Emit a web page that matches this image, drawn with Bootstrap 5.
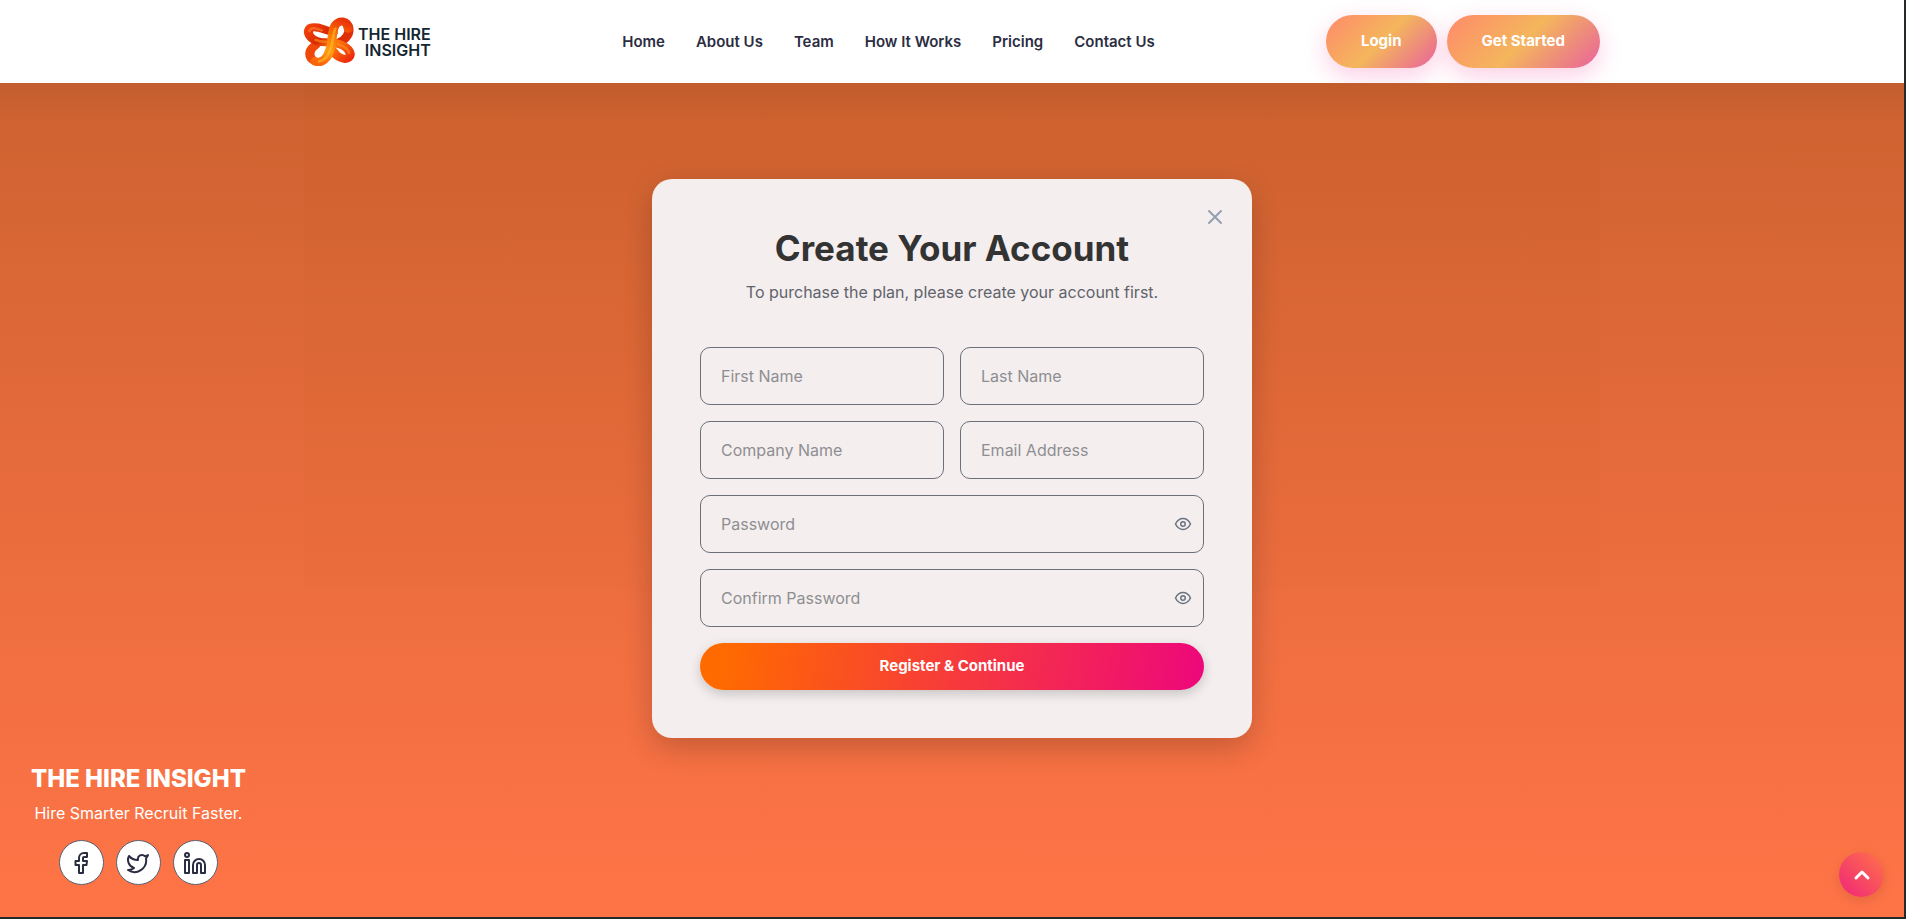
<!DOCTYPE html>
<html lang="en">
<head>
<meta charset="utf-8">
<meta name="viewport" content="width=device-width, initial-scale=1">
<title>The Hire Insight – Create Your Account</title>
<link href="https://cdn.jsdelivr.net/npm/bootstrap@5.3.0/dist/css/bootstrap.min.css" rel="stylesheet">
<style>
  body {
    font-family: Inter, "Liberation Sans", sans-serif;
    border-right: 2px solid #24292a;
    border-bottom: 2px solid #24292a;
    background: #fff;
  }
  .site-header { min-height: 83px; background: #fff; }
  .site-header .container { max-width: 1320px; }
  .brand-mark { width: 147px; gap: 3px; }
  .brand-mark svg { width: 51px; height: 48px; overflow: visible; }
  .brand-name { font-size: 16px; line-height: 16px; font-weight: 600; color: #14262f; text-align: right; }
  .main-links { gap: 0 31px; }
  .main-links a { font-size: 15px; line-height: 24px; font-weight: 600; color: #2b2d42; text-decoration: none; }
  .header-actions { gap: 10px; }
  .btn-glow, .btn-glow:hover {
    height: 53px; padding: 0 35px; border: 0; border-radius: 50px;
    font-size: 15px; font-weight: 700; color: #fff;
    background: linear-gradient(135deg, #ff8a6b 0%, #f4b65c 50%, #e8629c 100%);
    box-shadow: 0 8px 25px rgba(240, 11, 120, .2);
  }
  .hero-area {
    background:
      linear-gradient(rgba(0, 0, 0, .05), rgba(0, 0, 0, 0)) center top / 100% 40px no-repeat,
      linear-gradient(rgba(180, 80, 10, .05), rgba(180, 80, 10, .03)) center top / 1296px 508px no-repeat,
      linear-gradient(#cd6230, #dc6737 27%, #ee6e40 62%, #ff7447);
  }
  .signup-card {
    width: 100%; max-width: 600px; margin-top: 96px; padding: 48px;
    border-radius: 20px; background: #f4eeee;
    box-shadow: 0 10px 30px rgba(0, 0, 0, .2);
  }
  .signup-card h1 { font-size: 35px; line-height: 43px; font-weight: 700; color: #333; margin-bottom: 10px; }
  .signup-card .intro { font-size: 16px; line-height: 24px; color: #5f636b; margin-bottom: 43px; }
  .field-grid { display: grid; grid-template-columns: 1fr 1fr; gap: 16px; }
  .field-wide { grid-column: 1 / -1; }
  .signup-card .form-control {
    height: 58px; padding: 0 20px; border: 1px solid #6b7079; border-radius: 10px;
    background: transparent; font-size: 16px; color: #333;
  }
  .signup-card .form-control::placeholder { color: #8e8e92; }
  .plain-btn { padding: 0; border: 0; background: none; }
  .close-btn { top: 28px; right: 27px; width: 20px; height: 20px; color: #94a0b2; }
  .eye-btn { top: 0; right: 12px; width: 18px; height: 58px; color: #6b7280; }
  .btn-register, .btn-register:hover {
    height: 47px; border: 0; border-radius: 30px; color: #fff; font-size: 15px; font-weight: 700;
    background: linear-gradient(100deg, #ff6a00 5%, #ee0979 98%);
    box-shadow: 0 4px 12px rgba(0, 0, 0, .18);
  }
  .site-footer { padding: 24px 31px 32px; color: #fff; }
  .site-footer h2 { font-size: 24px; line-height: 29px; font-weight: 800; margin-bottom: 8px; }
  .site-footer p { font-size: 16px; line-height: 24px; margin-bottom: 15px; }
  .social-links { gap: 12px; }
  .social-links a { width: 45px; height: 45px; background: #fff; color: #2b2d42; border: 1px solid #5a6070; }
  .to-top {
    right: 22px; bottom: 22px; width: 45px; height: 45px; border: 0; color: #fff;
    background: linear-gradient(45deg, #f0257a, #ff7347);
    box-shadow: 0 4px 12px rgba(0, 0, 0, .1);
  }
  svg { display: block; fill: none; stroke: currentColor; stroke-width: 2; stroke-linecap: round; stroke-linejoin: round; }
</style>
</head>
<body class="min-vh-100 d-flex flex-column">
<header class="site-header d-flex">
  <div class="container d-flex flex-wrap align-items-center justify-content-between">
    <a href="#" class="brand-mark d-flex align-items-center text-decoration-none">
      <svg viewBox="12 4 150 162" preserveAspectRatio="none" aria-hidden="true">
        <defs>
          <linearGradient id="knotBack" gradientUnits="userSpaceOnUse" x1="20" y1="30" x2="150" y2="140">
            <stop offset="0" stop-color="#f4420b"/><stop offset=".35" stop-color="#d92a05"/><stop offset=".6" stop-color="#ff7a0c"/><stop offset="1" stop-color="#ee2c0c"/>
          </linearGradient>
          <linearGradient id="knotFront" gradientUnits="userSpaceOnUse" x1="125" y1="10" x2="55" y2="155">
            <stop offset="0" stop-color="#e93409"/><stop offset=".4" stop-color="#ff7a06"/><stop offset=".7" stop-color="#ff9a12"/><stop offset="1" stop-color="#f9650b"/>
          </linearGradient>
        </defs>
        <g stroke-width="27">
          <path stroke="#f0480b" d="M46 96C28 108 24 130 36 144C46 154 58 154 66 148"/>
          <path stroke="#df2d08" d="M142 30C150 54 136 78 112 88"/>
          <path stroke="url(#knotBack)" d="M98 52C74 46 48 28 30 38C14 58 38 88 80 86C112 86 144 100 148 126C146 150 122 144 106 128L98 116"/>
          <path stroke="url(#knotFront)" d="M142 40C140 10 114 10 104 28C92 50 98 80 88 112C82 138 66 160 44 150"/>
        </g>
        <g stroke-width="8" opacity=".55">
          <path stroke="#ff8a3c" d="M28 48C32 34 46 38 64 46"/>
          <path stroke="#ffc52e" d="M104 40C96 64 98 90 88 114C82 134 70 148 56 151"/>
          <path stroke="#ff9a22" d="M112 92C128 98 142 108 145 122"/>
          <path stroke="#ffa01e" d="M46 78C56 83 66 84 76 84"/>
        </g>
      </svg>
      <span class="brand-name">THE HIRE<br>INSIGHT</span>
    </a>
    <nav class="main-links d-flex flex-wrap" aria-label="Main">
      <a href="#">Home</a>
      <a href="#">About Us</a>
      <a href="#">Team</a>
      <a href="#">How It Works</a>
      <a href="#">Pricing</a>
      <a href="#">Contact Us</a>
    </nav>
    <div class="header-actions d-flex">
      <button type="button" class="btn btn-glow">Login</button>
      <button type="button" class="btn btn-glow">Get Started</button>
    </div>
  </div>
</header>

<main class="hero-area flex-grow-1 d-flex flex-column align-items-center">
  <form class="signup-card position-relative text-center">
    <button type="button" class="plain-btn close-btn position-absolute" aria-label="Close">
      <svg width="20" height="20" viewBox="0 0 20 20"><path d="M4 4l12 12M16 4L4 16"/></svg>
    </button>
    <h1>Create Your Account</h1>
    <p class="intro">To purchase the plan, please create your account first.</p>
    <div class="field-grid">
      <input type="text" class="form-control" aria-label="First Name" placeholder="First Name">
      <input type="text" class="form-control" aria-label="Last Name" placeholder="Last Name">
      <input type="text" class="form-control" aria-label="Company Name" placeholder="Company Name">
      <input type="email" class="form-control" aria-label="Email Address" placeholder="Email Address">
      <div class="field-wide position-relative">
        <input type="password" class="form-control" aria-label="Password" placeholder="Password">
        <button type="button" class="plain-btn eye-btn position-absolute d-flex align-items-center" aria-label="Show password">
          <svg width="18" height="18" viewBox="0 0 24 24"><path d="M2 12C4.500 7 8 4.800 12 4.800S19.500 7 22 12C19.500 17 16 19.200 12 19.200S4.500 17 2 12z"/><circle cx="12" cy="12" r="3"/></svg>
        </button>
      </div>
      <div class="field-wide position-relative">
        <input type="password" class="form-control" aria-label="Confirm Password" placeholder="Confirm Password">
        <button type="button" class="plain-btn eye-btn position-absolute d-flex align-items-center" aria-label="Show confirmed password">
          <svg width="18" height="18" viewBox="0 0 24 24"><path d="M2 12C4.500 7 8 4.800 12 4.800S19.500 7 22 12C19.500 17 16 19.200 12 19.200S4.500 17 2 12z"/><circle cx="12" cy="12" r="3"/></svg>
        </button>
      </div>
      <button type="submit" class="btn btn-register field-wide">Register &amp; Continue</button>
    </div>
  </form>

  <footer class="site-footer align-self-start text-center mt-auto">
    <h2>THE HIRE INSIGHT</h2>
    <p>Hire Smarter Recruit Faster.</p>
    <div class="social-links d-flex justify-content-center">
      <a href="#" class="rounded-circle d-flex align-items-center justify-content-center" aria-label="Facebook">
        <svg width="24" height="24" viewBox="0 0 24 24"><path d="M18 2h-3a5 5 0 0 0-5 5v3H6.500v4H10v8h4v-8h3.500l.500-4h-4V7a1 1 0 0 1 1-1h3z"/></svg>
      </a>
      <a href="#" class="rounded-circle d-flex align-items-center justify-content-center" aria-label="Twitter">
        <svg width="24" height="24" viewBox="0 0 24 24"><path d="M22 4s-.700 2.100-2 3.400c1.600 10-9.400 17.300-18 11.600 2.200.100 4.400-.600 6-2C3 15.500.500 9.600 3 5c2.200 2.600 5.600 4.100 9 4-.900-4.200 4-6.600 7-3.800 1.100 0 3-1.200 3-1.200z"/></svg>
      </a>
      <a href="#" class="rounded-circle d-flex align-items-center justify-content-center" aria-label="LinkedIn">
        <svg width="24" height="24" viewBox="0 0 24 24"><path d="M16 8a6 6 0 0 1 6 6v8h-4v-8a2 2 0 0 0-4 0v8h-4v-8a6 6 0 0 1 6-6z"/><path d="M2 9h4v13H2z"/><circle cx="4" cy="4" r="2"/></svg>
      </a>
    </div>
  </footer>
</main>

<button type="button" class="to-top position-fixed rounded-circle d-flex align-items-center justify-content-center p-0" aria-label="Back to top">
  <svg width="20" height="20" viewBox="0 0 20 20"><path stroke-width="3" d="M4 13l6-6 6 6"/></svg>
</button>
<script src="https://cdn.jsdelivr.net/npm/bootstrap@5.3.0/dist/js/bootstrap.bundle.min.js"></script>
</body>
</html>
